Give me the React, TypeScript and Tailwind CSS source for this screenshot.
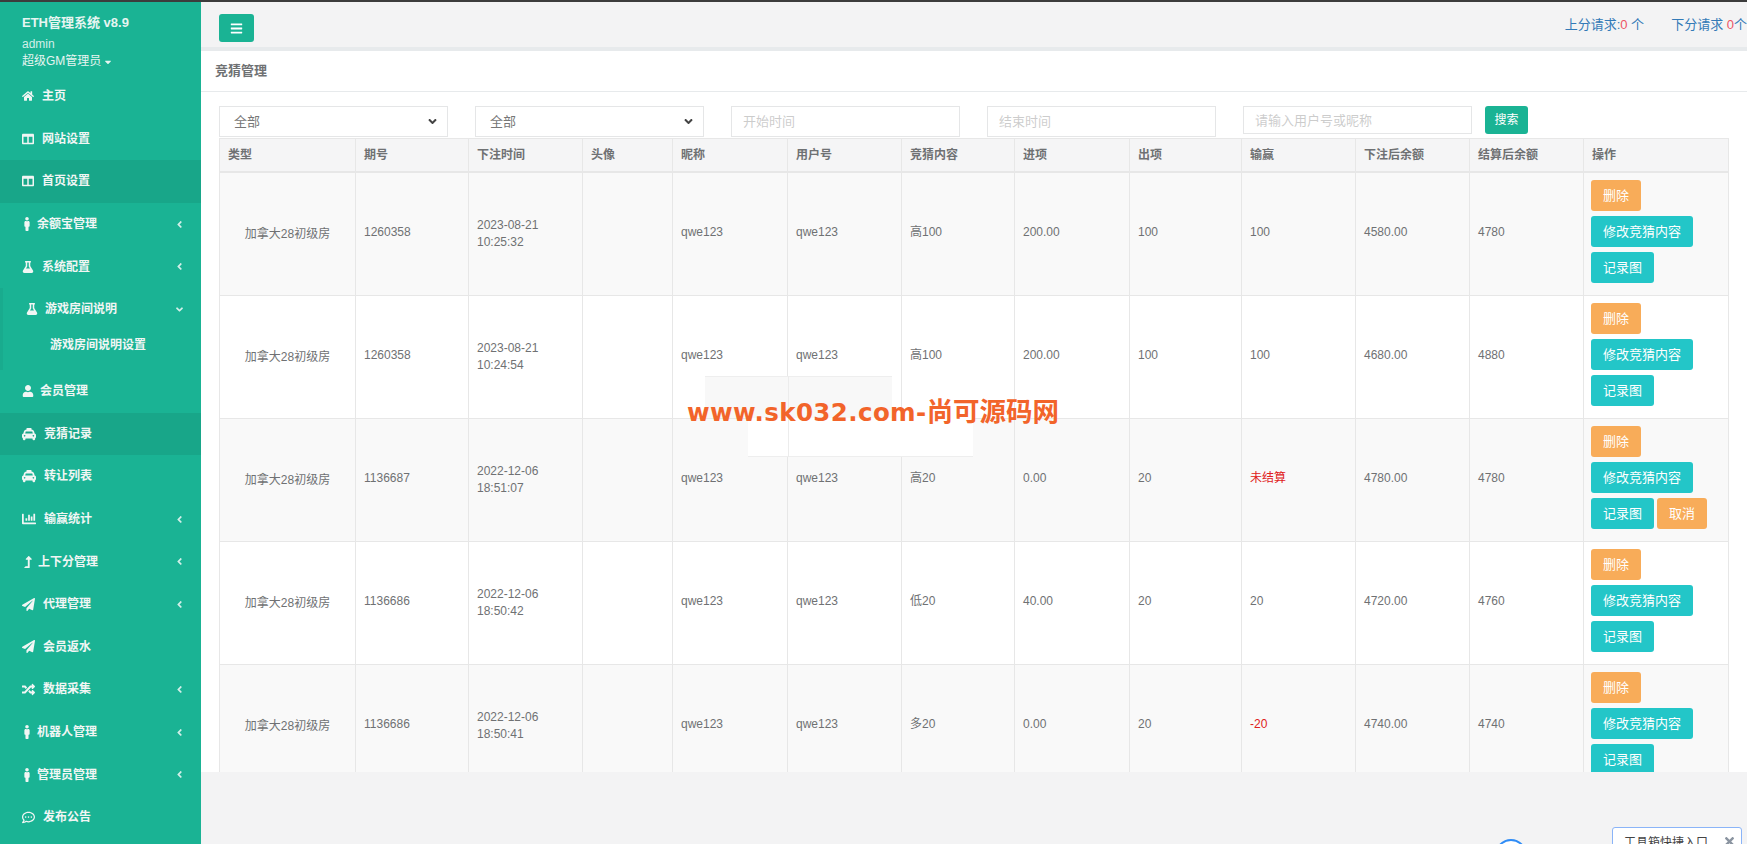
import type { ComponentType } from "react";
import {
  FaAngleDown,
  FaAngleLeft,
  FaBars,
  FaCaretDown,
  FaChartBar,
  FaColumns,
  FaFlask,
  FaHome,
  FaLevelUpAlt,
  FaMale,
  FaPaperPlane,
  FaRandom,
  FaRegCommentDots,
  FaTaxi,
  FaTimes,
  FaUser,
} from "react-icons/fa";

type NavItem = {
  label: string;
  icon: ComponentType<{ className?: string }>;
  box: string;
  size?: string;
  arrow?: boolean;
  active?: boolean;
};

const navTop: NavItem[] = [
  { label: "主页", icon: FaHome, box: "w-[20px]" },
  { label: "网站设置", icon: FaColumns, box: "w-[20px]" },
  { label: "首页设置", icon: FaColumns, box: "w-[20px]", active: true },
  { label: "余额宝管理", icon: FaMale, box: "w-[15px]", size: "size-[14px] -ml-[2px]", arrow: true },
  { label: "系统配置", icon: FaFlask, box: "w-[20px]", arrow: true },
];

const navBottom: NavItem[] = [
  { label: "会员管理", icon: FaUser, box: "w-[18px]" },
  { label: "竞猜记录", icon: FaTaxi, box: "w-[22px]", size: "size-[14px]", active: true },
  { label: "转让列表", icon: FaTaxi, box: "w-[22px]", size: "size-[14px]" },
  { label: "输赢统计", icon: FaChartBar, box: "w-[22px]", size: "size-[14px]", arrow: true },
  { label: "上下分管理", icon: FaLevelUpAlt, box: "w-[16px]", arrow: true },
  { label: "代理管理", icon: FaPaperPlane, box: "w-[21px]", size: "size-[13px]", arrow: true },
  { label: "会员返水", icon: FaPaperPlane, box: "w-[21px]", size: "size-[13px]" },
  { label: "数据采集", icon: FaRandom, box: "w-[21px]", size: "size-[13px]", arrow: true },
  { label: "机器人管理", icon: FaMale, box: "w-[15px]", size: "size-[14px] -ml-[2px]", arrow: true },
  { label: "管理员管理", icon: FaMale, box: "w-[15px]", size: "size-[14px] -ml-[2px]", arrow: true },
  { label: "发布公告", icon: FaRegCommentDots, box: "w-[21px]", size: "size-[13px]" },
];

const columns = [
  { label: "类型", width: "w-[136px]" },
  { label: "期号", width: "w-[113px]" },
  { label: "下注时间", width: "w-[114px]" },
  { label: "头像", width: "w-[90px]" },
  { label: "昵称", width: "w-[115px]" },
  { label: "用户号", width: "w-[114px]" },
  { label: "竞猜内容", width: "w-[113px]" },
  { label: "进项", width: "w-[115px]" },
  { label: "出项", width: "w-[112px]" },
  { label: "输赢", width: "w-[114px]" },
  { label: "下注后余额", width: "w-[114px]" },
  { label: "结算后余额", width: "w-[114px]" },
  { label: "操作", width: "w-[145px]" },
];

const rows = [
  { no: "1260358", date: "2023-08-21", time: "10:25:32", bet: "高100", income: "200.00", out: "100", win: "100", after: "4580.00", settle: "4780" },
  { no: "1260358", date: "2023-08-21", time: "10:24:54", bet: "高100", income: "200.00", out: "100", win: "100", after: "4680.00", settle: "4880" },
  { no: "1136687", date: "2022-12-06", time: "18:51:07", bet: "高20", income: "0.00", out: "20", win: "未结算", red: true, after: "4780.00", settle: "4780", cancel: true },
  { no: "1136686", date: "2022-12-06", time: "18:50:42", bet: "低20", income: "40.00", out: "20", win: "20", after: "4720.00", settle: "4760" },
  { no: "1136686", date: "2022-12-06", time: "18:50:41", bet: "多20", income: "0.00", out: "20", win: "-20", red: true, after: "4740.00", settle: "4740" },
];

const cell = "border border-[#e7e7e7] p-2 align-middle";

function NavRow({ item }: { item: NavItem }) {
  const Icon = item.icon;
  return (
    <div
      className={`flex h-[42.6px] items-center pl-[22px] pr-[16px] text-[12px] font-semibold text-[#f1f6f4] ${
        item.active ? "bg-[#18a689]" : ""
      }`}
    >
      <span className={`${item.box} shrink-0`}>
        <Icon className={item.size ?? "size-[12px]"} />
      </span>
      <span className="flex-1">{item.label}</span>
      {item.arrow && <FaAngleLeft className="size-[11px] text-[#d3efe9]" />}
    </div>
  );
}

function Sidebar() {
  return (
    <aside className="w-[201px] shrink-0 bg-[#1ab394]">
      <div className="h-[75px] pl-[22px] pt-[14px] text-[12px] leading-[17px]">
        <p className="text-[13px] font-semibold text-[#e6f5f1]">ETH管理系统 v8.9</p>
        <p className="mt-[5px] text-[#d3efe9]">admin</p>
        <p className="flex items-center gap-[2px] text-[#e6f5f1]">
          超级GM管理员
          <FaCaretDown className="size-[10px]" />
        </p>
      </div>
      {navTop.map((item) => (
        <NavRow key={item.label} item={item} />
      ))}
      <div className="h-[82px] border-l-[3px] border-[#19ab8e] text-[12px] font-semibold text-[#f1f6f4]">
        <div className="flex h-[42.6px] items-center pl-[23px] pr-[16px]">
          <span className="w-[19px] shrink-0">
            <FaFlask className="size-[12px]" />
          </span>
          <span className="flex-1">游戏房间说明</span>
          <FaAngleDown className="size-[11px] text-[#d3efe9]" />
        </div>
        <p className="pl-[47px] leading-[29px]">游戏房间说明设置</p>
      </div>
      {navBottom.map((item) => (
        <NavRow key={item.label} item={item} />
      ))}
    </aside>
  );
}

function Actions({ cancel }: { cancel?: boolean }) {
  const btn = "h-[31px] rounded-[3px] px-3 text-[13px] leading-[31px] text-white";
  return (
    <div className="flex flex-col items-start gap-[5px] pb-[5px]">
      <button className={`${btn} bg-[#f8ac59]`}>删除</button>
      <button className={`${btn} bg-[#23c6c8]`}>修改竞猜内容</button>
      <div className="flex gap-[3px]">
        <button className={`${btn} bg-[#23c6c8]`}>记录图</button>
        {cancel && <button className={`${btn} bg-[#f8ac59]`}>取消</button>}
      </div>
    </div>
  );
}

function Filters() {
  const field = "h-[31px] w-[229px] border border-[#e5e6e7] bg-white px-[11px] text-[13px] text-[#999] outline-none";
  const select = "flex h-[31px] w-[229px] items-center justify-between border border-[#e5e6e7] bg-white pl-[14px] pr-[8px] text-[13px] text-[#777]";
  return (
    <div className="flex items-start gap-[27px] pl-[18px]">
      <div className={select}>
        全部
        <FaAngleDown className="size-[13px] text-[#444]" />
      </div>
      <div className={select}>
        全部
        <FaAngleDown className="size-[13px] text-[#444]" />
      </div>
      <input className={field} placeholder="开始时间" readOnly />
      <input className={field} placeholder="结束时间" readOnly />
      <div className="flex items-start gap-[13px]">
        <input className="h-[28px] w-[229px] border border-[#e5e6e7] bg-white px-[11px] text-[13px] text-[#999] outline-none" placeholder="请输入用户号或昵称" readOnly />
        <button className="h-[28px] w-[43px] rounded-[3px] bg-[#1ab394] text-[12px] text-white">搜索</button>
      </div>
    </div>
  );
}

export default function App() {
  return (
    <div className="relative flex h-[844px] overflow-hidden bg-[#f3f3f4] font-['Liberation_Sans','Noto_Sans_CJK_SC',sans-serif] text-[12px] text-[#6f7173]">
      <div className="absolute inset-x-0 top-0 z-10 h-[2px] bg-[#3c3c3c]" />
      <Sidebar />
      <main className="flex min-w-0 flex-1 flex-col">
        <header className="flex h-[51px] shrink-0 items-start justify-between border-b-[4px] border-[#e7eaec] pl-[18px] pt-[14px]">
          <button className="flex h-[28px] w-[35px] items-center justify-center rounded-[3px] bg-[#1ab394] text-white">
            <FaBars className="size-[13px]" />
          </button>
          <div className="flex gap-[27px] whitespace-nowrap pt-px text-[13px] text-[#337ab7]">
            <span>
              上分请求:<span className="text-[#ed5565]">0</span> 个
            </span>
            <span>
              下分请求 <span className="text-[#ed5565]">0</span>个
            </span>
          </div>
        </header>
        <div className="flex h-[41px] shrink-0 items-center border-b border-[#e7eaec] bg-white pl-[14px] text-[13px] font-semibold">
          竞猜管理
        </div>
        <section className="h-[680px] shrink-0 overflow-hidden bg-white pt-[14px]">
          <Filters />
          <table className="ml-[18px] mt-px table-fixed border-collapse text-[12px]">
            <thead>
              <tr className="bg-[#f5f5f6]">
                {columns.map((col) => (
                  <th key={col.label} className={`${col.width} border border-b-2 border-[#e7e7e7] px-2 py-2 text-left font-semibold leading-[16px]`}>
                    {col.label}
                  </th>
                ))}
              </tr>
            </thead>
            <tbody>
              {rows.map((row, i) => (
                <tr key={i} className={`h-[123px] ${i % 2 === 0 ? "bg-[#f9f9f9]" : "bg-white"}`}>
                  <td className={`${cell} text-center`}>加拿大28初级房</td>
                  <td className={`${cell} pb-[11px]`}>{row.no}</td>
                  <td className={`${cell} leading-[17px]`}>
                    {row.date}
                    <br />
                    {row.time}
                  </td>
                  <td className={cell} />
                  <td className={`${cell} pb-[11px]`}>qwe123</td>
                  <td className={`${cell} pb-[11px]`}>qwe123</td>
                  <td className={`${cell} pb-[11px]`}>{row.bet}</td>
                  <td className={`${cell} pb-[11px]`}>{row.income}</td>
                  <td className={`${cell} pb-[11px]`}>{row.out}</td>
                  <td className={`${cell} pb-[11px] ${row.red ? "text-[#e02020]" : ""}`}>{row.win}</td>
                  <td className={`${cell} pb-[11px]`}>{row.after}</td>
                  <td className={`${cell} pb-[11px]`}>{row.settle}</td>
                  <td className="border border-[#e7e7e7] pb-[6px] pl-[7px] pr-2 pt-[7px] align-middle">
                    <Actions cancel={row.cancel} />
                  </td>
                </tr>
              ))}
            </tbody>
          </table>
        </section>
      </main>

      {/* watermark over the table */}
      <div className="absolute left-[705px] top-[376px] h-[42px] w-[187px] border-t border-[#eeeeee] bg-[#f8f8f8]" />
      <div className="absolute left-[748px] top-[418px] h-[39px] w-[225px] border-b border-[#eeeeee] bg-white" />
      <div className="absolute left-[788px] top-[376px] h-[81px] w-px bg-[#ececec]" />
      <div className="absolute left-[687px] top-[394px] whitespace-nowrap font-bold leading-[32px] text-[#f2642a]">
        <span className="font-['DejaVu_Sans',sans-serif] text-[24.5px] tracking-[0.4px]">www.sk032.com-</span>
        <span className="font-['Noto_Sans_CJK_SC',sans-serif] text-[26.5px]">尚可源码网</span>
      </div>

      {/* browser widgets cut off by the window edge */}
      <div className="absolute left-[1495px] top-[839px] size-[32px] rounded-full border-2 border-[#2f8cf6] bg-white" />
      <div className="absolute left-[1612px] top-[827px] flex h-[30px] w-[130px] items-start justify-between rounded-t-[3px] border border-[#8ab4f8] bg-white pl-[11px] pr-[5px] pt-[6px] text-[12px] text-[#444]">
        工具箱快捷入口
        <FaTimes className="mt-px size-[13px] text-[#8a94a0]" />
      </div>
    </div>
  );
}
